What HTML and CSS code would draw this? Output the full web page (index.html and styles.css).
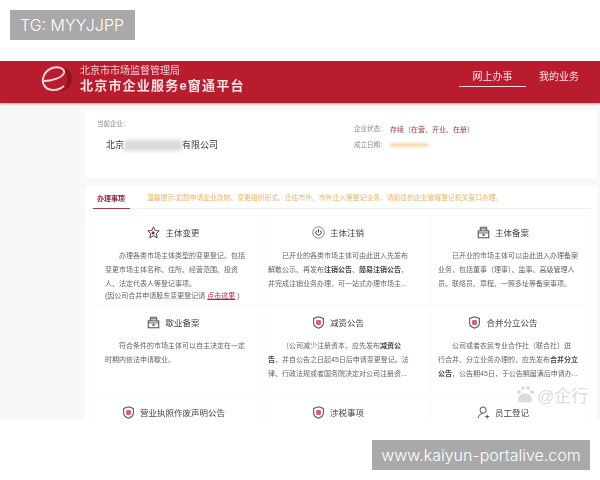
FILE: index.html
```html
<!DOCTYPE html>
<html lang="en">
<head>
    <meta charset="UTF-8">
    <meta name="viewport" content="width=device-width, initial-scale=1.0">
    <title>北京市企业服务e窗通平台</title>
    <link rel="stylesheet" href="styles.css">
</head>
<body>
    <div class="tag tag-top">TG: MYYJJPP</div>

    <div class="shot">
        <!-- Header -->
        <header class="header">
            <svg class="logo" width="32" height="28" viewBox="0 0 32 28">
                <circle cx="19" cy="14" r="12" fill="#8f1423"/>
                <circle cx="14" cy="14" r="12.5" fill="#b91c2e"/>
                <path d="M3 16 C10 16 21 13 23 8 C24 3 17 1 11 3 C3 6 0 15 3 20 C6 26 16 27 23 21" fill="none" stroke="#f6dcdc" stroke-width="1.9"/>
            </svg>
            <div class="brand">
                <div class="brand-sub">北京市市场监督管理局</div>
                <div class="brand-main">北京市企业服务e窗通平台</div>
            </div>
            <nav class="nav">
                <a class="nav-item active">网上办事</a>
                <a class="nav-item">我的业务</a>
            </nav>
        </header>

        <div class="content">
            <!-- Company info -->
            <section class="info-card">
                <div class="info-left">
                    <div class="info-label">当前企业：</div>
                    <div class="company">北京<span class="mask"></span>有限公司</div>
                </div>
                <div class="info-right">
                    <div class="info-row"><span class="info-label">企业状态：</span><span class="status">存续（在营、开业、在册）</span></div>
                    <div class="info-row"><span class="info-label">成立日期：</span><span class="date-mask"></span></div>
                </div>
            </section>

            <!-- Items -->
            <section class="main-card">
                <div class="tabs">
                    <span class="tab">办理事项</span>
                    <span class="notice">温馨提示:如您申请企业改制、变更组织形式、迁往市外、市外迁入等登记业务，请前往的企业管辖登记机关窗口办理。</span>
                </div>
                <div class="grid">
                    <div class="item">
                        <h3 class="item-title">
                            <svg class="icon" viewBox="0 0 16 16"><path d="M8 1 L10 5.5 L15 6 L11.5 9.5 L12.5 14.5 L8 12 L3.5 14.5 L4.5 9.5 L1 6 L6 5.5 Z" fill="none" stroke="#444" stroke-width="1.2"/><circle cx="7.5" cy="8.5" r="2" fill="#c11d30"/></svg>
                            主体变更
                        </h3>
                        <p><span class="indent"></span>办理各类市场主体类型的变更登记。包括<br>变更市场主体名称、住所、经营范围、投资<br>人、法定代表人等登记事项。</p>
                        <p class="extra">(因公司合并申请股东变更登记请 <span class="link">点击这里</span> )</p>
                    </div>
                    <div class="item">
                        <h3 class="item-title">
                            <svg class="icon" viewBox="0 0 16 16"><circle cx="8" cy="8" r="7" fill="none" stroke="#666" stroke-width="1"/><path d="M5.8 5.5 A3.3 3.3 0 1 0 10.2 5.5 M8 4 V8" fill="none" stroke="#333" stroke-width="1.2"/></svg>
                            主体注销
                        </h3>
                        <p><span class="indent"></span>已开业的各类市场主体可由此进入先发布<br>解散公示、再发布<b>注销公告</b>、<b>简易注销公告</b>，<br>并完成注销业务办理，可一站式办理市场主...</p>
                    </div>
                    <div class="item">
                        <h3 class="item-title">
                            <svg class="icon" viewBox="0 0 16 16"><path d="M4 6 V1.5 H12 V6 M4 3.5 H12" fill="none" stroke="#444" stroke-width="1.1"/><rect x="1.5" y="6" width="13" height="8.5" fill="none" stroke="#444" stroke-width="1.2"/><path d="M1.5 8.5 H14.5" stroke="#444" stroke-width="1"/><circle cx="8" cy="11" r="1.4" fill="#c11d30"/></svg>
                            主体备案
                        </h3>
                        <p><span class="indent"></span>已开业的市场主体可以由此进入办理备案<br>业务，包括董事（理事）、监事、高级管理人<br>员、联络员、章程、一照多址等备案事项。</p>
                    </div>
                    <div class="item">
                        <h3 class="item-title">
                            <svg class="icon" viewBox="0 0 16 16"><path d="M4 6 V1.5 H12 V6 M4 3.5 H12" fill="none" stroke="#444" stroke-width="1.1"/><rect x="1.5" y="6" width="13" height="8.5" fill="none" stroke="#444" stroke-width="1.2"/><path d="M1.5 8.5 H14.5" stroke="#444" stroke-width="1"/><circle cx="8" cy="11" r="1.4" fill="#c11d30"/></svg>
                            歇业备案
                        </h3>
                        <p><span class="indent"></span>符合条件的市场主体可以自主决定在一定<br>时期内依法申请歇业。</p>
                    </div>
                    <div class="item">
                        <h3 class="item-title">
                            <svg class="icon" viewBox="0 0 16 16"><path d="M8 1 L14 3 V9 C14 12 11 14 8 15 C5 14 2 12 2 9 V3 Z" fill="none" stroke="#555" stroke-width="1.3"/><rect x="5" y="5" width="6" height="6" rx="1.5" fill="#d9606e"/></svg>
                            减资公告
                        </h3>
                        <p><span class="indent"></span>（公司减少注册资本，应先发布<b>减资公</b><br><b>告</b>，并自公告之日起45日后申请变更登记。法<br>律、行政法规或者国务院决定对公司注册资...</p>
                    </div>
                    <div class="item">
                        <h3 class="item-title">
                            <svg class="icon" viewBox="0 0 16 16"><path d="M8 1 L14 3 V9 C14 12 11 14 8 15 C5 14 2 12 2 9 V3 Z" fill="none" stroke="#555" stroke-width="1.3"/><rect x="5" y="5" width="6" height="6" rx="1.5" fill="#d9606e"/></svg>
                            合并分立公告
                        </h3>
                        <p><span class="indent"></span>公司或者农民专业合作社（联合社）进<br>行合并、分立业务办理的，应先发布<b>合并分立</b><br><b>公告</b>，公告期45日，于公告期届满后申请办...</p>
                    </div>
                    <div class="item">
                        <h3 class="item-title">
                            <svg class="icon" viewBox="0 0 16 16"><path d="M8 1 L14 3 V9 C14 12 11 14 8 15 C5 14 2 12 2 9 V3 Z" fill="none" stroke="#555" stroke-width="1.3"/><rect x="5" y="5" width="6" height="6" rx="1.5" fill="#d9606e"/></svg>
                            营业执照作废声明公告
                        </h3>
                    </div>
                    <div class="item">
                        <h3 class="item-title">
                            <svg class="icon" viewBox="0 0 16 16"><path d="M8 1 L14 3 V9 C14 12 11 14 8 15 C5 14 2 12 2 9 V3 Z" fill="none" stroke="#555" stroke-width="1.3"/><rect x="5" y="5" width="6" height="6" rx="1.5" fill="#d9606e"/></svg>
                            涉税事项
                        </h3>
                    </div>
                    <div class="item">
                        <h3 class="item-title">
                            <svg class="icon" viewBox="0 0 16 16"><circle cx="7.5" cy="5" r="3.8" fill="none" stroke="#444" stroke-width="1.1"/><path d="M1.5 15 C2 11 4 9.5 7 9.5 M10 13 H15 M12.5 10.5 V15.5" fill="none" stroke="#444" stroke-width="1.1"/></svg>
                            员工登记
                        </h3>
                    </div>
                </div>
            </section>
        </div>

        <!-- Source watermark -->
        <div class="watermark">
            <svg width="20" height="20" viewBox="0 0 20 20" fill="#dcdcdc"><circle cx="4" cy="7" r="2"/><circle cx="8" cy="3" r="2"/><circle cx="13" cy="3" r="2"/><circle cx="17" cy="7" r="2"/><path d="M10 8 C6 8 3 12 3 15 C3 18 7 18 10 17 C13 18 17 18 17 15 C17 12 14 8 10 8 Z"/></svg>
            <span>@企行</span>
        </div>
    </div>

    <div class="tag tag-bottom">www.kaiyun-portalive.com</div>
</body>
</html>
```

FILE: styles.css
```css
* {
    box-sizing: border-box;
}

html, body {
    margin: 0;
    height: 480px;
    overflow: hidden;
    background-color: #fff;
}

body {
    position: relative;
    padding-top: 61px;
    font-family: "Liberation Sans", "Noto Sans CJK SC", sans-serif;
}

/* Grey labels laid over the screenshot */
.tag {
    position: absolute;
    background-color: #a9a9a9;
    color: #fff;
    display: flex;
    align-items: center;
    z-index: 5;
}

.tag-top {
    left: 10px;
    top: 10px;
    width: 125px;
    height: 30px;
    padding-left: 10px;
    font-family: "Inter", "Liberation Sans", sans-serif;
    font-size: 16px;
    font-weight: 300;
}

.tag-bottom {
    left: 372px;
    top: 440px;
    width: 218px;
    height: 30px;
    justify-content: center;
    font-family: "Inter", "Liberation Sans", sans-serif;
    font-size: 16px;
    font-weight: 300;
}

.shot {
    position: relative;
    height: 359px;
    overflow: hidden;
    background-color: #f9f8f8;
}

.header {
    height: 42px;
    background-color: #b91c2e;
    box-shadow: 0 1px 2px rgba(120, 20, 30, 0.4);
    display: flex;
    align-items: center;
    padding-left: 41px;
    color: #fff;
}

.logo {
    flex: none;
    margin-right: 7px;
    margin-bottom: 6px;
}

.brand {
    padding-bottom: 5px;
    filter: blur(0.3px);
}

.brand-sub {
    font-size: 10px;
    line-height: 13px;
    color: #f4d3d6;
}

.brand-main {
    font-size: 13px;
    line-height: 18px;
    font-weight: bold;
    letter-spacing: 1.2px;
    color: #f9e4e4;
}

.nav {
    margin-left: auto;
    margin-right: 8px;
    display: flex;
    align-self: flex-start;
    filter: blur(0.3px);
}

.nav-item {
    width: 66px;
    padding-top: 8px;
    font-size: 10px;
    line-height: 16px;
    text-align: center;
    color: #fbe6e6;
}

.nav-item.active {
    width: 67px;
    height: 26px;
    border-bottom: 1px solid #f6dcdc;
}

.content {
    padding: 7px 3px 0 85px;
    filter: blur(0.35px);
}

.info-card {
    height: 68px;
    background-color: #fff;
    border-radius: 3px;
    display: flex;
    padding: 9px 12px;
}

.info-left {
    width: 257px;
}

.info-label {
    font-size: 6.5px;
    line-height: 10px;
    color: #8a8a8a;
}

.company {
    margin: 9px 0 0 9px;
    font-size: 9px;
    line-height: 14px;
    color: #333;
    display: flex;
    align-items: center;
}

.mask {
    width: 58px;
    height: 11px;
    background-color: #d9d9d9;
    filter: blur(2px);
}

.info-right {
    padding-top: 2px;
}

.info-row {
    height: 16px;
    display: flex;
    align-items: center;
}

.info-row .info-label {
    width: 36px;
}

.status {
    font-size: 7px;
    color: #9c3b4a;
}

.date-mask {
    width: 38px;
    height: 4px;
    background-color: #fbd9ae;
    filter: blur(1px);
}

.main-card {
    margin-top: 8px;
    height: 240px;
    background-color: #fff;
    border-radius: 3px;
    padding: 0 5px;
}

.tabs {
    height: 23px;
    display: flex;
    align-items: center;
    border-bottom: 1px solid #f0eeee;
}

.tab {
    width: 37px;
    height: 23px;
    margin-left: 3px;
    padding-left: 4px;
    font-size: 7px;
    line-height: 25px;
    font-weight: bold;
    color: #8c2a3b;
    border-bottom: 1px solid #a8394b;
}

.notice {
    margin-left: 17px;
    font-size: 6.8px;
    white-space: nowrap;
    color: #e9b264;
}

.grid {
    display: grid;
    grid-template-columns: 174px 166px 160px;
    grid-auto-rows: 90px;
    padding-top: 6px;
}

.item {
    padding: 9px 12px 0 4px;
    color: #666;
    box-shadow: inset 0 0 0 1px #fbfbfb;
}

.item:nth-child(3n+1) {
    padding-left: 15px;
}

.item:nth-child(3n) {
    padding-left: 8px;
}

.item-title {
    margin: 0;
    height: 16px;
    padding-right: 10px;
    display: flex;
    justify-content: center;
    align-items: center;
    gap: 5px;
    font-size: 8.5px;
    font-weight: normal;
    color: #444;
}

.icon {
    width: 13px;
    height: 13px;
    flex: none;
}

.item p {
    margin: 9px 0 0;
    font-size: 7px;
    line-height: 14px;
    white-space: nowrap;
}

.item p.extra {
    margin-top: 0;
    line-height: 10px;
}

.indent {
    display: inline-block;
    width: 14px;
}

.item b {
    color: #444;
}

.link {
    color: #c11d30;
    text-decoration: underline;
}

/* Faint source mark, bottom right */
.watermark {
    position: absolute;
    left: 515px;
    top: 321px;
    display: flex;
    align-items: center;
    gap: 2px;
    font-size: 17px;
    color: #dcdcdc;
}
```
